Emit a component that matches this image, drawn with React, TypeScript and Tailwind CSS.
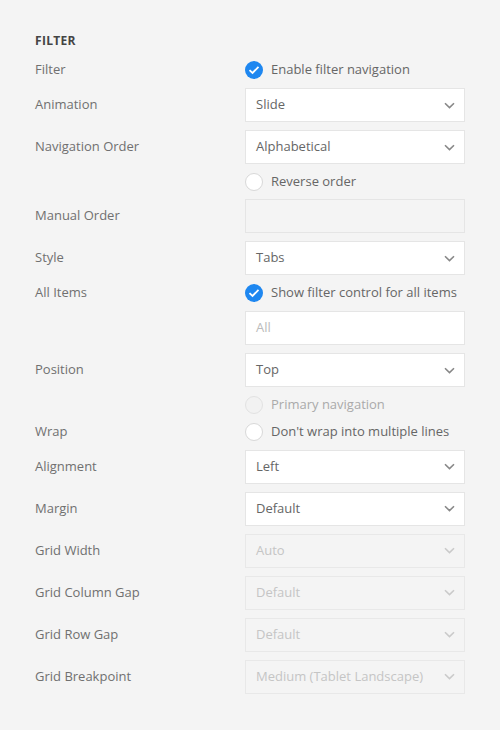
import React from 'react';

const font = { fontFamily: '"Open Sans", "Liberation Sans", sans-serif' };

const Chevron: React.FC<{ disabled?: boolean }> = ({ disabled }) => (
  <svg width="11" height="7" viewBox="0 0 11 7" className={disabled ? 'text-[#cacaca]' : 'text-[#888]'}>
    <path d="M1 1.2 5.5 5.6 10 1.2" fill="none" stroke="currentColor" strokeWidth="1.6" />
  </svg>
);

const Select: React.FC<{ value: string; disabled?: boolean }> = ({ value, disabled }) => (
  <div
    className={`h-[34px] w-[220px] flex items-center justify-between pl-[10px] pr-[9px] border text-[13px] ${
      disabled ? 'bg-[#f4f4f4] border-[#e8e8e8] text-[#c5c5c5]' : 'bg-white border-[#e5e5e5] text-[#666]'
    }`}
  >
    <span>{value}</span>
    <Chevron disabled={disabled} />
  </div>
);

const Input: React.FC<{ placeholder?: string; disabled?: boolean }> = ({ placeholder, disabled }) => (
  <div
    className={`h-[34px] w-[220px] flex items-center pl-[10px] border text-[13px] ${
      disabled ? 'bg-[#f4f4f4] border-[#e5e5e5]' : 'bg-white border-[#e5e5e5]'
    } text-[#bbb]`}
  >
    {placeholder}
  </div>
);

const Check: React.FC<{ label: string }> = ({ label }) => (
  <div className="h-5 flex items-center gap-2 text-[13px] text-[#666]">
    <span className="w-[18px] h-[18px] rounded-full bg-[#1e87f0] flex items-center justify-center">
      <svg width="12" height="10" viewBox="0 0 12 10">
        <path d="M1.5 5.2 4.5 8 10.5 1.8" fill="none" stroke="white" strokeWidth="1.8" />
      </svg>
    </span>
    {label}
  </div>
);

const Radio: React.FC<{ label: string; disabled?: boolean }> = ({ label, disabled }) => (
  <div className={`h-[19px] flex items-center gap-2 text-[13px] ${disabled ? 'text-[#aaa]' : 'text-[#666]'}`}>
    <span
      className={`w-[18px] h-[18px] rounded-full border ${
        disabled ? 'bg-[#f2f2f2] border-[#e2e2e2]' : 'bg-white border-[#d8d8d8]'
      }`}
    />
    {label}
  </div>
);

const Row: React.FC<{ label?: string; children: React.ReactNode }> = ({ label, children }) => (
  <div className="flex items-center">
    <div className="w-[210px] text-[13px] text-[#707070]">{label}</div>
    {children}
  </div>
);

export default function App() {
  return (
    <div className="min-h-[730px] w-[500px] bg-[#f4f4f4] px-[35px] pt-[34px]" style={font}>
      <div className="text-[12px] leading-[14px] font-bold text-[#444] tracking-wide mb-3">FILTER</div>
      <div className="flex flex-col gap-2">
        <Row label="Filter"><Check label="Enable filter navigation" /></Row>
        <Row label="Animation"><Select value="Slide" /></Row>
        <Row label="Navigation Order"><Select value="Alphabetical" /></Row>
        <Row><Radio label="Reverse order" /></Row>
        <Row label="Manual Order"><Input disabled /></Row>
        <Row label="Style"><Select value="Tabs" /></Row>
        <Row label="All Items"><Check label="Show filter control for all items" /></Row>
        <Row><Input placeholder="All" /></Row>
        <Row label="Position"><Select value="Top" /></Row>
        <Row><Radio label="Primary navigation" disabled /></Row>
        <Row label="Wrap"><Radio label="Don't wrap into multiple lines" /></Row>
        <Row label="Alignment"><Select value="Left" /></Row>
        <Row label="Margin"><Select value="Default" /></Row>
        <Row label="Grid Width"><Select value="Auto" disabled /></Row>
        <Row label="Grid Column Gap"><Select value="Default" disabled /></Row>
        <Row label="Grid Row Gap"><Select value="Default" disabled /></Row>
        <Row label="Grid Breakpoint"><Select value="Medium (Tablet Landscape)" disabled /></Row>
      </div>
    </div>
  );
}
